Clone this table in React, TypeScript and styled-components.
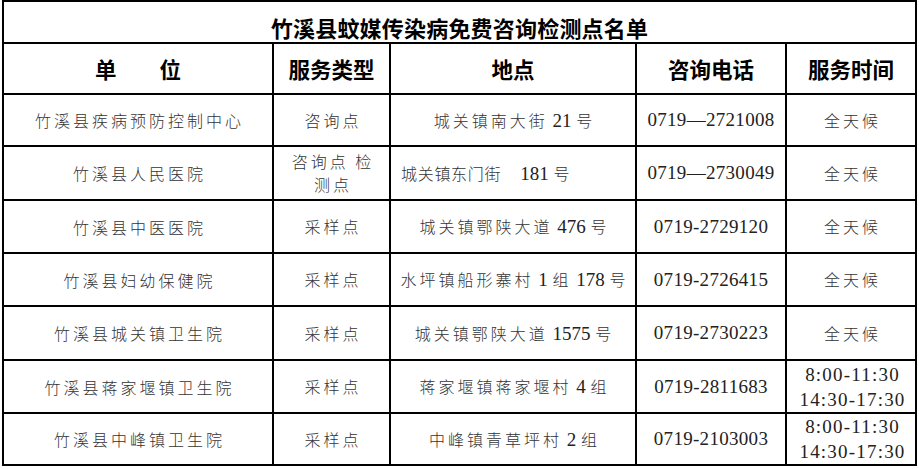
import React from "react";
import styled, { createGlobalStyle } from "styled-components";

const GlobalStyle = createGlobalStyle`
  html, body { margin: 0; padding: 0; background: #ffffff; }
  body { font-family: "Noto Sans CJK SC", "Noto Sans", sans-serif; }
`;

const Sheet = styled.div`
  display: grid;
  grid-template-columns: 268px 115px 244px 148px 128px;
  grid-template-rows: 40px 49px 50px 52px 51px 51px 52px 51px 50px;
  gap: 2px;
  padding: 2px;
  background: #000000;
  width: max-content;
  margin-left: 2px;
`;

const TitleCell = styled.div`
  grid-column: 1 / -1;
  background: #ffffff;
  display: flex;
  align-items: center;
  justify-content: center;
  padding-top: 9px;
  box-sizing: border-box;
  font-size: 22px;
  font-weight: 700;
  letter-spacing: 0.2px;
  color: #000000;
`;

const HeadCell = styled.div`
  background: #ffffff;
  display: flex;
  align-items: center;
  justify-content: center;
  font-size: 21.5px;
  font-weight: 700;
  color: #000000;
`;

const Cell = styled.div<{ $align?: "left" | "center"; $spacing?: number }>`
  background: #ffffff;
  display: flex;
  flex-direction: column;
  align-items: ${(p) => (p.$align === "left" ? "flex-start" : "center")};
  justify-content: center;
  box-sizing: border-box;
  padding-left: ${(p) => (p.$align === "left" ? 10 : p.$spacing ?? 3)}px;
  font-size: 16px;
  font-weight: 300;
  letter-spacing: ${(p) => p.$spacing ?? 3}px;
  color: #333333;
  text-align: center;
  white-space: nowrap;
`;

const Line = styled.div<{ $lh?: number }>`
  line-height: ${(p) => p.$lh ?? 23}px;
`;

const Num = styled.span<{ $spacing?: number }>`
  font-family: "Liberation Serif", "Times New Roman", serif;
  font-size: 19px;
  font-weight: 400;
  letter-spacing: ${(p) => p.$spacing ?? 0}px;
  color: #222222;
  white-space: pre;
`;

const Mixed: React.FC<{ text: string; spacing?: number }> = ({ text, spacing }) => {
  const parts = text.split(/( *[0-9][0-9:\-—–]* ?)/);
  return (
    <>
      {parts.map((part, i) =>
        i % 2 === 1 ? (
          <Num key={i} $spacing={spacing}>
            {part}
          </Num>
        ) : (
          <React.Fragment key={i}>{part}</React.Fragment>
        )
      )}
    </>
  );
};

type Row = {
  unit: string;
  type: string[];
  addr: string;
  addrAlign?: "left" | "center";
  addrSpacing?: number;
  phone: string;
  time: string[];
};

const rows: Row[] = [
  { unit: "竹溪县疾病预防控制中心", type: ["咨询点"], addr: "城关镇南大街 21 号", phone: "0719—2721008", time: ["全天候"] },
  { unit: "竹溪县人民医院", type: ["咨询点 检", "测点"], addr: "城关镇东门街    181 号", addrAlign: "left", addrSpacing: 0.7, phone: "0719—2730049", time: ["全天候"] },
  { unit: "竹溪县中医医院", type: ["采样点"], addr: "城关镇鄂陕大道 476 号", phone: "0719-2729120", time: ["全天候"] },
  { unit: "竹溪县妇幼保健院", type: ["采样点"], addr: "水坪镇船形寨村 1 组 178 号", phone: "0719-2726415", time: ["全天候"] },
  { unit: "竹溪县城关镇卫生院", type: ["采样点"], addr: "城关镇鄂陕大道 1575 号", phone: "0719-2730223", time: ["全天候"] },
  { unit: "竹溪县蒋家堰镇卫生院", type: ["采样点"], addr: "蒋家堰镇蒋家堰村 4 组", phone: "0719-2811683", time: ["8:00-11:30", "14:30-17:30"] },
  { unit: "竹溪县中峰镇卫生院", type: ["采样点"], addr: "中峰镇青草坪村 2 组", phone: "0719-2103003", time: ["8:00-11:30", "14:30-17:30"] },
];

export default function App() {
  return (
    <>
      <GlobalStyle />
      <Sheet>
        <TitleCell>竹溪县蚊媒传染病免费咨询检测点名单</TitleCell>
        <HeadCell>单　　位</HeadCell>
        <HeadCell>服务类型</HeadCell>
        <HeadCell>地点</HeadCell>
        <HeadCell>咨询电话</HeadCell>
        <HeadCell>服务时间</HeadCell>
        {rows.map((r) => (
          <React.Fragment key={r.unit}>
            <Cell>{r.unit}</Cell>
            <Cell>
              {r.type.map((t) => (
                <Line key={t}>{t}</Line>
              ))}
            </Cell>
            <Cell $align={r.addrAlign} $spacing={r.addrSpacing}>
              <Line>
                <Mixed text={r.addr} />
              </Line>
            </Cell>
            <Cell $spacing={0}>
              <Num $spacing={0.3}>{r.phone}</Num>
            </Cell>
            <Cell>
              {r.time.map((t) =>
                /[0-9]/.test(t) ? (
                  <Line key={t} $lh={24}>
                    <Num $spacing={1.2}>{t}</Num>
                  </Line>
                ) : (
                  <Line key={t}>{t}</Line>
                )
              )}
            </Cell>
          </React.Fragment>
        ))}
      </Sheet>
    </>
  );
}
